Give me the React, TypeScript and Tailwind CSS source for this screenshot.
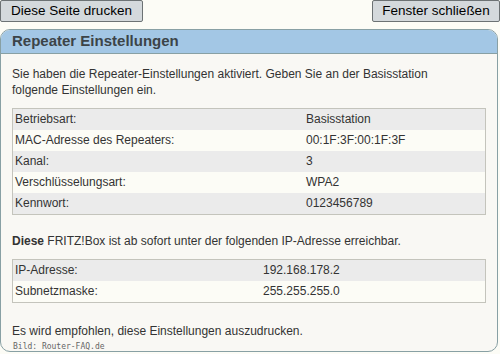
const rows1: [string, string][] = [
  ["Betriebsart:", "Basisstation"],
  ["MAC-Adresse des Repeaters:", "00:1F:3F:00:1F:3F"],
  ["Kanal:", "3"],
  ["Verschlüsselungsart:", "WPA2"],
  ["Kennwort:", "0123456789"],
];

const rows2: [string, string][] = [
  ["IP-Adresse:", "192.168.178.2"],
  ["Subnetzmaske:", "255.255.255.0"],
];

function InfoTable({ rows, col }: { rows: [string, string][]; col: string }) {
  return (
    <div className="border border-[#c4c4bc] mx-[11px]">
      {rows.map(([k, v], i) => (
        <div
          key={k}
          className={`flex h-[21px] items-center ${i % 2 === 0 ? "bg-[#ebebeb]" : "bg-[#fcfcf6]"}`}
        >
          <div className={`${col} pl-[2px]`}>{k}</div>
          <div>{v}</div>
        </div>
      ))}
    </div>
  );
}

export default function App() {
  return (
    <div className="w-[500px] h-[354px] bg-[#fcfcf6] text-[12px] text-[#333] overflow-hidden" style={{ fontFamily: '"Liberation Sans", Arial, sans-serif' }}>
      <div className="flex justify-between h-[22px]">
        <button className="h-[22px] w-[143px] bg-[#d4d9dc] border border-[#6c7274] rounded-[2px] text-[13.5px] text-black">
          Diese Seite drucken
        </button>
        <button className="h-[22px] w-[128px] bg-[#d4d9dc] border border-[#6c7274] rounded-[2px] text-[13.5px] text-black">
          Fenster schließen
        </button>
      </div>
      <div className="mt-[7px] w-[498px] h-[323px] border border-[#88a0a4] rounded-[10px] bg-[#f9f8f4] overflow-hidden flex flex-col">
        <div className="h-[25px] bg-[#a3c7e5] border-b border-[#88a0a4] pl-[11px] flex items-center text-[15px] font-bold text-[#3c4448]">
          Repeater Einstellungen
        </div>
        <p className="px-[11px] pt-[12px] leading-[16px]">
          Sie haben die Repeater-Einstellungen aktiviert. Geben Sie an der Basisstation
          <br />
          folgende Einstellungen ein.
        </p>
        <div className="mt-[10px]">
          <InfoTable rows={rows1} col="w-[293px]" />
        </div>
        <p className="px-[11px] mt-[18px] leading-[16px]">
          <b>Diese</b> FRITZ!Box ist ab sofort unter der folgenden IP-Adresse erreichbar.
        </p>
        <div className="mt-[10px]">
          <InfoTable rows={rows2} col="w-[250px]" />
        </div>
        <p className="px-[11px] mt-[20px] leading-[16px]">
          Es wird empfohlen, diese Einstellungen auszudrucken.
        </p>
        <div className="px-[12px] mt-[2px] text-[8px] text-[#666] leading-[12px]" style={{ fontFamily: '"DejaVu Sans Mono", monospace' }}>
          Bild: Router-FAQ.de
        </div>
      </div>
    </div>
  );
}
